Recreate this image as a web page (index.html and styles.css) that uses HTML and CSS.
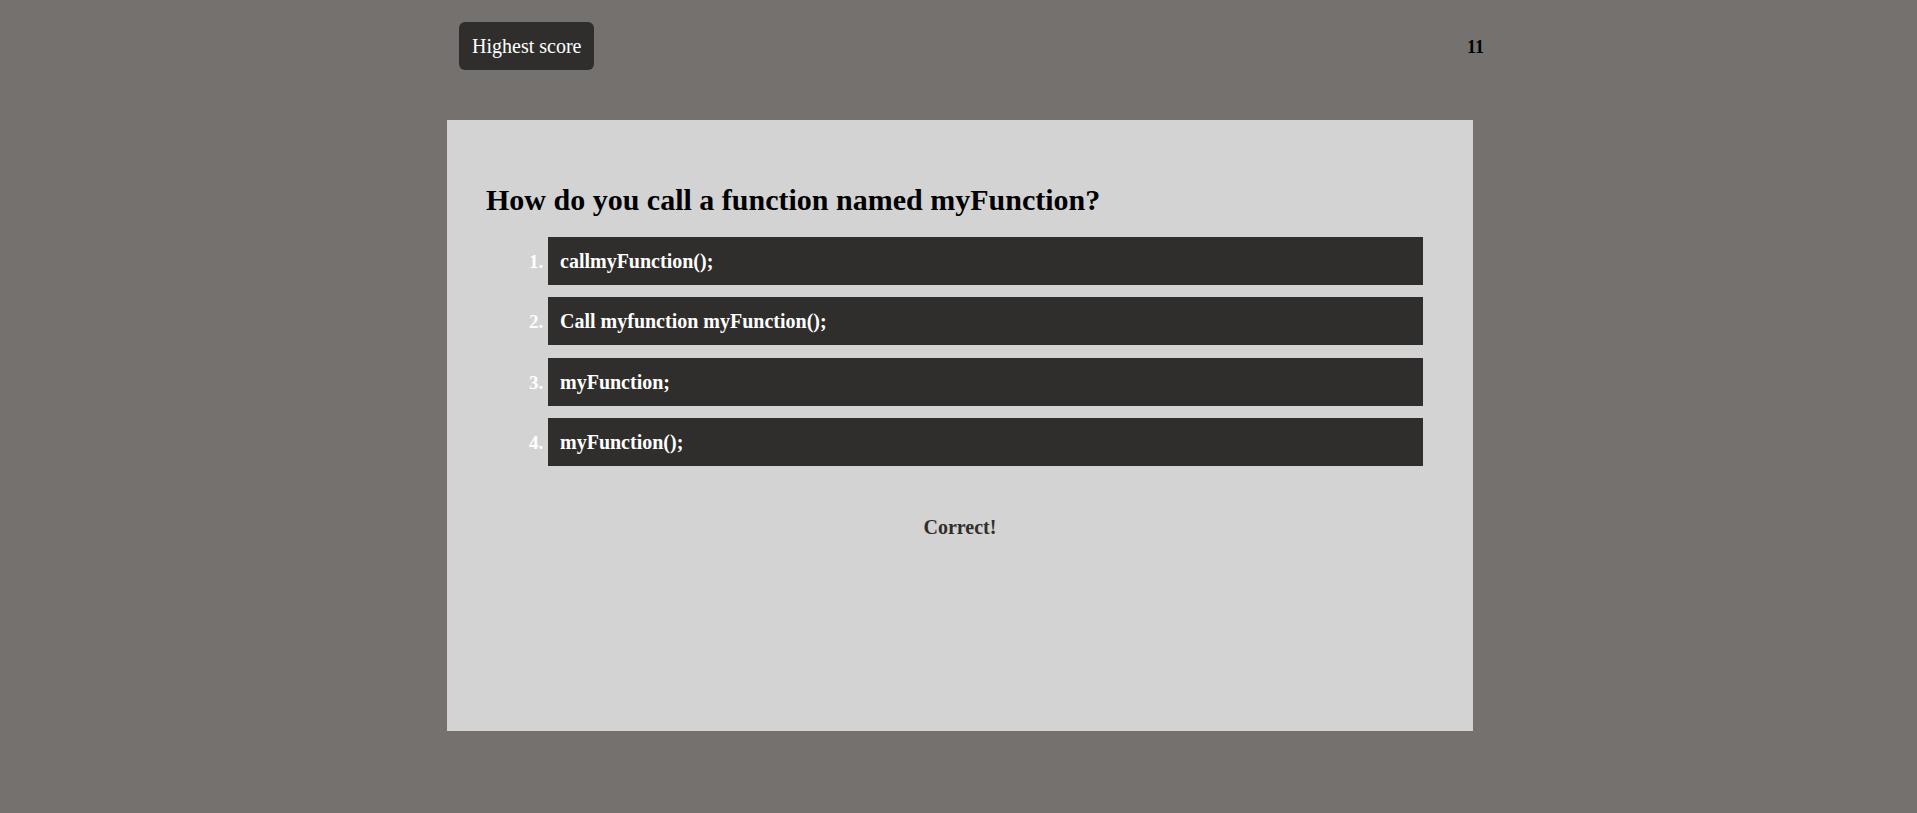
FILE: index.html
```html
<!DOCTYPE html>
<html lang="en">
<head>
<meta charset="utf-8">
<title>Quiz</title>
<link rel="stylesheet" href="styles.css">
</head>
<body>
<div class="wrap">
  <header class="top">
    <button class="hs-btn">Highest score</button>
    <span class="timer">11</span>
  </header>
  <main class="card">
    <h2 class="question">How do you call a function named myFunction?</h2>
    <ol class="choices">
      <li class="choice">callmyFunction();</li>
      <li class="choice">Call myfunction myFunction();</li>
      <li class="choice">myFunction;</li>
      <li class="choice">myFunction();</li>
    </ol>
    <p class="result">Correct!</p>
  </main>
</div>
</body>
</html>
```
FILE: styles.css
```css
html, body {
  margin: 0;
  padding: 0;
}
body {
  background: #75716f;
  font-family: "Liberation Serif", "Times New Roman", serif;
  padding-left: 3px;
}
.wrap {
  width: 1026px;
  margin: 0 auto;
}
.top {
  display: flex;
  justify-content: space-between;
  align-items: baseline;
  margin: 0 -12px 0 12px;
  padding-top: 22px;
  height: 120px;
  box-sizing: border-box;
}
.hs-btn {
  font-family: inherit;
  font-size: 20px;
  line-height: 24px;
  color: #ffffff;
  background: #302e2d;
  border: none;
  border-radius: 6px;
  padding: 12px 13px;
  margin: 0;
  cursor: pointer;
}
.timer {
  font-size: 18px;
  font-weight: bold;
  color: #000;
  padding-right: 1px;
}
.card {
  background: #d3d3d3;
  height: 611px;
  box-sizing: border-box;
  padding: 62px 50px 0 39px;
}
.question {
  margin: 0 0 19px 0;
  font-size: 30px;
  line-height: 36px;
  font-weight: bold;
  color: #000;
}
.choices {
  margin: 0;
  padding-left: 62px;
}
.choice {
  background: #302e2d;
  color: #ffffff;
  font-size: 20px;
  font-weight: bold;
  line-height: 24px;
  padding: 12px 12px;
  margin-bottom: 12.4px;
}
.choice::marker {
  font-size: 19px;
  font-weight: bold;
  color: #ffffff;
}
.result {
  margin: 49px 0 0 0;
  text-align: center;
  font-size: 20px;
  line-height: 24px;
  font-weight: bold;
  color: #302e2d;
  padding-left: 11px;
}
```
